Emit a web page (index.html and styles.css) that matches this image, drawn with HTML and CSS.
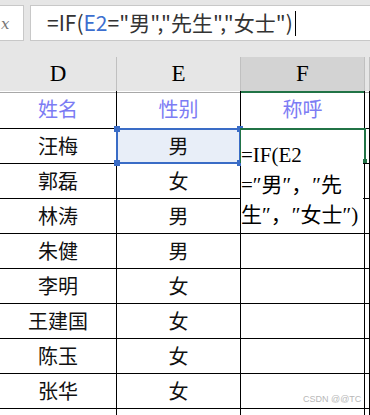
FILE: index.html
```html
<html lang="en">
<head>
  <meta charset="utf-8">
  <link rel="stylesheet" href="styles.css">
</head>
<body>
  <div class="bar">
    <div class="namebox"><span class="fx">x</span></div>
    <div class="formula">=IF(<span class="ref">E2</span>="男","先生","女士")<span class="caret"></span></div>
  </div>
  <div class="sheet">
    <div class="row head">
      <div class="cell">D</div>
      <div class="cell">E</div>
      <div class="cell cur">F</div>
      <div class="cell"></div>
    </div>
    <div class="row title">
      <div class="cell">姓名</div>
      <div class="cell">性别</div>
      <div class="cell">称呼</div>
      <div class="cell"></div>
    </div>
    <div class="row"><div class="cell">汪梅</div><div class="cell sel">男</div><div class="cell"></div><div class="cell"></div></div>
    <div class="row"><div class="cell">郭磊</div><div class="cell">女</div><div class="cell"></div><div class="cell"></div></div>
    <div class="row"><div class="cell">林涛</div><div class="cell">男</div><div class="cell"></div><div class="cell"></div></div>
    <div class="row"><div class="cell">朱健</div><div class="cell">男</div><div class="cell"></div><div class="cell"></div></div>
    <div class="row"><div class="cell">李明</div><div class="cell">女</div><div class="cell"></div><div class="cell"></div></div>
    <div class="row"><div class="cell">王建国</div><div class="cell">女</div><div class="cell"></div><div class="cell"></div></div>
    <div class="row"><div class="cell">陈玉</div><div class="cell">女</div><div class="cell"></div><div class="cell"></div></div>
    <div class="row"><div class="cell">张华</div><div class="cell">女</div><div class="cell"></div><div class="cell"></div></div>
    <div class="row"><div class="cell"></div><div class="cell"></div><div class="cell"></div><div class="cell"></div></div>

    <div class="select">
      <span class="dot tl"></span><span class="dot tr"></span>
      <span class="dot bl"></span><span class="dot br"></span>
    </div>
    <div class="edit"><span class="gdot"></span></div>
    <div class="edit-text">=IF(E2<br>=″男″，″先<br>生″，″女士″)</div>
    <div class="mark">CSDN @@TC</div>
  </div>
</body>
</html>
```

FILE: styles.css
```css
html, body {
    overflow: hidden;
}

body {
    margin: 0;
    width: 370px;
    height: 415px;
    background: #fff;
    font-family: "Noto Sans CJK SC", sans-serif;
}

.bar {
    display: flex;
    gap: 6px;
    height: 57px;
    padding-top: 5px;
    box-sizing: border-box;
    background: #e6e6e6;
}

.namebox {
    width: 24px;
    height: 36px;
    box-sizing: border-box;
    background: #fff;
    border: 1px solid #c8c8c8;
    border-left: none;
    overflow: hidden;
}

.fx {
    display: block;
    margin: 9px 0 0 1px;
    font-family: "DejaVu Serif", serif;
    font-style: italic;
    font-size: 15px;
    color: #777;
}

.formula {
    flex: 1;
    height: 36px;
    box-sizing: border-box;
    background: #fff;
    border: 1px solid #c8c8c8;
    border-right: none;
    padding-left: 16px;
    font-size: 21px;
    line-height: 33px;
    color: #333;
    white-space: nowrap;
}

.ref {
    color: #3c6ecf;
}

.caret {
    display: inline-block;
    width: 1px;
    height: 25px;
    margin-left: 2px;
    vertical-align: -5px;
    background: #000;
}

.sheet {
    position: relative;
    height: 358px;
    overflow: hidden;
}

.row {
    display: grid;
    grid-template-columns: 117px 124px 124px 1fr;
    height: 35px;
}

.cell {
    border-right: 1px solid #000;
    border-bottom: 1px solid #000;
    text-align: center;
    font-size: 20px;
    line-height: 34px;
    color: #111;
}

.sel {
    background: #e8eef8;
}

.head {
    height: 34px;
    background: #e6e6e6;
}

.head .cell {
    border-right-color: #c0c0c0;
    border-bottom: 1px solid #a8a8a8;
    font-family: "Liberation Serif", serif;
    font-size: 23px;
    line-height: 34px;
    color: #000;
}

.head .cur {
    background: #d3d3d3;
    border-bottom: 2px solid #217346;
}

.title {
    height: 38px;
}

.title .cell {
    line-height: 36px;
    color: #7c7cf4;
}

.select {
    position: absolute;
    left: 116px;
    top: 71px;
    width: 125px;
    height: 36px;
    box-sizing: border-box;
    border: 2px solid #3a6cc6;
}

.dot {
    position: absolute;
    width: 6px;
    height: 6px;
    background: #3a6cc6;
}

.tl { left: -4px; top: -4px; }
.tr { right: -4px; top: -4px; }
.bl { left: -4px; bottom: -4px; }
.br { right: -4px; bottom: -4px; }

.edit {
    position: absolute;
    left: 240px;
    top: 71px;
    width: 126px;
    height: 35px;
    box-sizing: border-box;
    border: 2px solid #217346;
    border-bottom: none;
}

.gdot {
    position: absolute;
    right: -3px;
    bottom: 0;
    width: 4px;
    height: 4px;
    background: #217346;
}

.edit-text {
    position: absolute;
    left: 241px;
    top: 73px;
    width: 122px;
    height: 103px;
    background: #fff;
    padding-top: 10px;
    box-sizing: border-box;
    font-family: "Liberation Serif", "Noto Sans CJK SC", serif;
    font-size: 21px;
    line-height: 30px;
    color: #000;
    white-space: nowrap;
}

.mark {
    position: absolute;
    left: 303px;
    top: 337px;
    font-family: "Liberation Sans", sans-serif;
    font-size: 9px;
    color: #b8b8b8;
}
```
